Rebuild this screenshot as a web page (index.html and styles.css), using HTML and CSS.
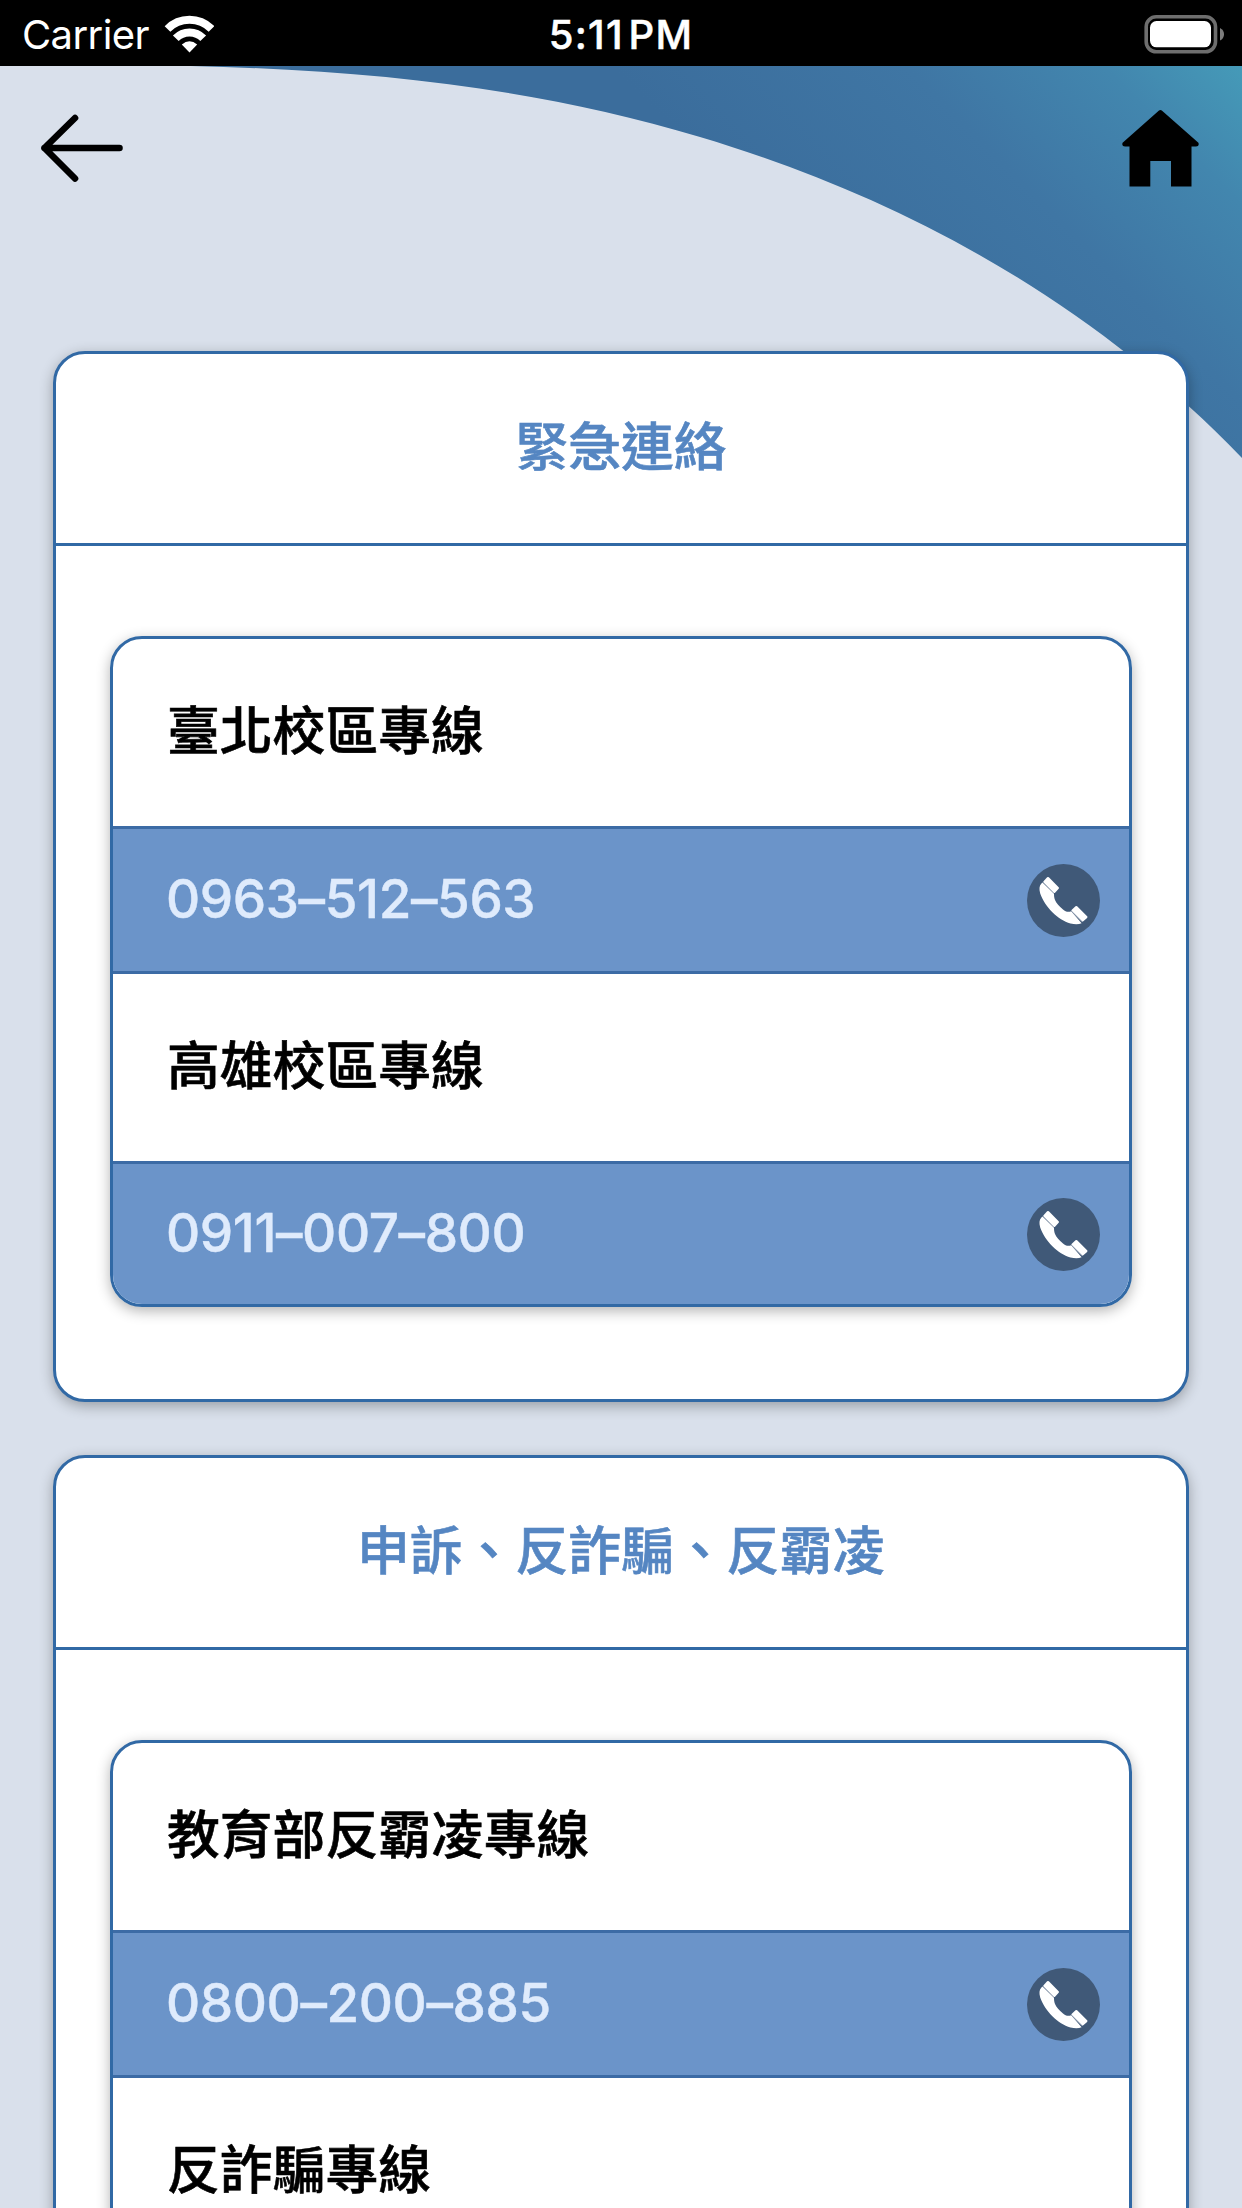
FILE: index.html
```html
<!DOCTYPE html>
<html lang="zh-Hant">
<head>
    <meta charset="UTF-8">
    <meta name="viewport" content="width=device-width, initial-scale=1.0">
    <title>緊急連絡</title>
    <link rel="stylesheet" href="styles.css">
</head>
<body>

<!-- shared phone icon -->
<svg class="sprite" width="0" height="0">
    <symbol id="phone" viewBox="0 0 73 73">
        <circle cx="36.5" cy="36.5" r="36.5" fill="#405978"/>
        <path d="M14.2 19.8 C12.3 22 12 25 13.2 29.5 C18 43 31 56 43.5 59.4 C48 60.5 51.5 60.5 54.6 59.2 L44.2 47.2 C41 48.3 38.5 47.6 36 45.4 C32 42 29.5 39.3 28 36 C27 33.5 27 31.6 27 29.5 L15.5 18.5 Z" fill="#fff"/>
        <g fill="#fff" stroke="#fff" stroke-width="2.4" stroke-linejoin="round">
            <path d="M21 14.2 L30.8 24 L27.2 27.8 L17.4 18 Z"/>
            <path d="M49.3 43.2 L59.3 53 L55.5 56.4 L45.6 46.6 Z"/>
        </g>
        <path d="M16.2 18.6 L27 29.4 M44.4 47 L55.2 57.8" stroke="#8b9aae" stroke-width="0.9"/>
    </symbol>
</svg>

<div class="status-bar">
    <div class="carrier">
        <span>Carrier</span>
        <svg width="50" height="38" viewBox="164 14 50 38">
            <path d="M167.5 28 A31 31 0 0 1 211.5 28" fill="none" stroke="#fff" stroke-width="8"/>
            <path d="M175.8 37.3 A19 19 0 0 1 203.2 37.3" fill="none" stroke="#fff" stroke-width="8"/>
            <path d="M181.8 43.6 Q189.5 37 197.2 43.6 L189.5 51.6 Z" fill="#fff"/>
        </svg>
    </div>
    <div class="time">5:11 PM</div>
    <div class="battery">
        <svg width="82" height="40" viewBox="1143 12 82 40">
            <rect x="1146.2" y="14.8" width="69.3" height="35" rx="10" fill="none" stroke="#6e6e6e" stroke-width="3.6"/>
            <rect x="1150" y="19" width="61" height="26.3" rx="6.5" fill="#fff"/>
            <path d="M1220 26 Q1224 28 1224 32.2 Q1224 36.5 1220 38.5 Z" fill="#7c7c7c"/>
        </svg>
    </div>
</div>

<div class="screen">
    <svg class="curve" width="1242" height="434" viewBox="0 66 1242 434">
        <defs>
            <linearGradient id="sky" gradientUnits="userSpaceOnUse" x1="1242" y1="66" x2="892" y2="416">
                <stop offset="0" stop-color="#459ab8"/>
                <stop offset="0.2" stop-color="#4286ae"/>
                <stop offset="0.48" stop-color="#3f76a4"/>
                <stop offset="0.9" stop-color="#3b6d9c"/>
            </linearGradient>
        </defs>
        <path d="M100 65 C333 65 520 83 700 137 C880 191 1078 287 1242 458 V65 Z" fill="url(#sky)"/>
    </svg>

    <div class="nav">
        <svg width="84" height="70" viewBox="40 113 84 70">
            <path d="M75 118 L44.5 148 L75 178.5 M44.5 148 H119.5" fill="none" stroke="#000" stroke-width="6.6" stroke-linecap="round" stroke-linejoin="round"/>
        </svg>
        <svg width="78" height="78" viewBox="1122 109 78 78">
            <path d="M1159 110.6 Q1160.4 109.4 1161.8 110.6 L1198.4 142.8 Q1199.6 146.5 1196 146.5 H1191.5 V186.6 H1171 V161 H1150.3 V186.6 H1129.5 V146.5 H1125 Q1121.4 146.5 1122.6 142.8 Z"/>
        </svg>
    </div>

    <div class="card">
        <h2>緊急連絡</h2>
        <div class="list">
            <div class="name">臺北校區專線</div>
            <div class="phone"><span>0963–512–563</span><svg class="icon"><use href="#phone"/></svg></div>
            <div class="name">高雄校區專線</div>
            <div class="phone"><span>0911–007–800</span><svg class="icon"><use href="#phone"/></svg></div>
        </div>
    </div>

    <div class="card">
        <h2>申訴、反詐騙、反霸凌</h2>
        <div class="list">
            <div class="name">教育部反霸凌專線</div>
            <div class="phone"><span>0800–200–885</span><svg class="icon"><use href="#phone"/></svg></div>
            <div class="name">反詐騙專線</div>
            <div class="phone"><span></span></div>
        </div>
    </div>
</div>

</body>
</html>
```
FILE: styles.css
```css
* {
    box-sizing: border-box;
}
body {
    margin: 0;
    height: 2208px;
    overflow: hidden;
    background: #d9e0eb;
    font-family: Inter, "Noto Sans CJK TC", sans-serif;
    color: #000;
}
svg {
    display: block;
}
.sprite {
    position: absolute;
}
.status-bar {
    display: grid;
    grid-template-columns: 1fr auto 1fr;
    align-items: center;
    height: 66px;
    padding: 0 17px 0 22px;
    background: #000;
    color: #fff;
    font-size: 40px;
    line-height: 66px;
}
.carrier {
    display: flex;
    align-items: center;
    gap: 15px;
}
.carrier span {
    padding-top: 2px;
    letter-spacing: -0.6px;
}
.time {
    padding: 2px 5px 0 0;
    font-weight: 500;
    letter-spacing: 1.2px;
    word-spacing: -7px;
    -webkit-text-stroke: 0.5px #fff;
}
.battery {
    display: flex;
    justify-content: flex-end;
}
.screen {
    position: relative;
    height: 2142px;
    overflow: hidden;
}
.curve {
    position: absolute;
    top: 0;
    left: 0;
    z-index: -1;
}
.nav {
    display: flex;
    justify-content: space-between;
    align-items: center;
    height: 164px;
    margin-bottom: 121px;
    padding: 0 42px 0 40px;
}
.card {
    margin: 0 53px 53px;
    height: 1051px;
    border: 3px solid #3169a5;
    border-radius: 32px;
    background: #fff;
    box-shadow: 0 4px 14px rgba(0, 0, 0, 0.3);
}
h2 {
    height: 192px;
    margin: 0 0 90px;
    border-bottom: 3px solid #3169a5;
    color: #5586c2;
    font-size: 52.8px;
    font-weight: 500;
    line-height: 186px;
    text-align: center;
    -webkit-text-stroke: 0.6px #5586c2;
}
.list {
    margin: 0 54px;
    border: 3px solid #3169a5;
    border-radius: 32px;
    overflow: hidden;
    box-shadow: 0 4px 14px rgba(0, 0, 0, 0.3);
}
.name {
    height: 187px;
    padding-left: 54px;
    font-size: 52.8px;
    font-weight: 500;
    line-height: 184px;
    -webkit-text-stroke: 0.6px #000;
}
.phone {
    display: flex;
    justify-content: space-between;
    align-items: center;
    height: 148px;
    padding: 0 29px 0 53px;
    border-top: 3px solid #3c6ba5;
    border-bottom: 3px solid #3c6ba5;
    background: #6b94c9;
    color: #dfebfc;
    font-size: 53px;
    font-weight: 500;
    letter-spacing: -0.4px;
    -webkit-text-stroke: 0.4px #dfebfc;
}
.phone span {
    padding-bottom: 3px;
}
.phone:last-child {
    height: 143px;
    padding-bottom: 0;
    border-bottom: none;
}
.icon {
    width: 73px;
    height: 73px;
}
```
